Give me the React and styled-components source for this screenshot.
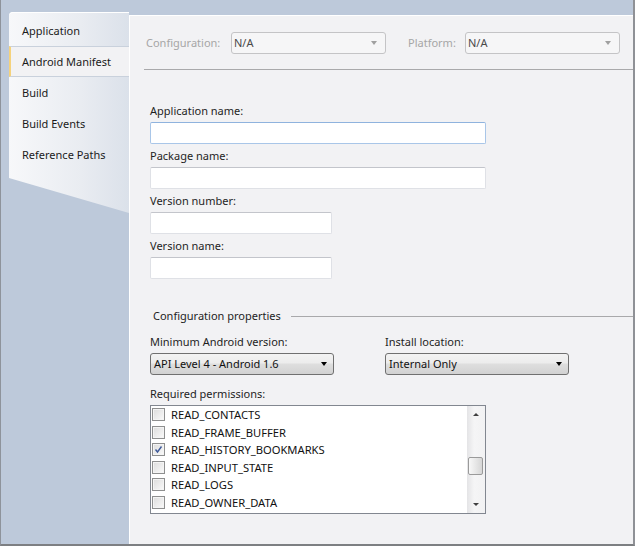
import React from 'react'
import styled, { createGlobalStyle } from 'styled-components'

const GlobalStyle = createGlobalStyle`
  html, body {
    margin: 0;
    padding: 0;
    background: #bdc9da;
  }
  body {
    font-family: "Noto Sans", "Open Sans", sans-serif;
    font-size: 11px;
    color: #1e1e1e;
  }
`

const Frame = styled.div`
  width: 635px;
  height: 546px;
  box-sizing: border-box;
  display: flex;
  background: #bdc9da;
  border-left: 1px solid #8e939b;
  border-right: 2px solid #8f9196;
  border-bottom: 2px solid #7d7f82;
`

const Sidebar = styled.nav`
  width: 128px;
  flex-shrink: 0;
  padding: 12px 0 0 8px;
  box-sizing: border-box;
  position: relative;
  z-index: 1;
`

const TabList = styled.div`
  height: 201px;
  padding-top: 3px;
  box-sizing: border-box;
  border-top-left-radius: 4px;
  background: linear-gradient(to right, #f7f8fa 0%, #e9ecf1 60%, #dbe1ea 100%);
  box-shadow: inset 0 1px 0 #ffffff;
  clip-path: polygon(0 0, 100% 0, 100% 100%, 0 166px);
`

const Tab = styled.div`
  height: 31px;
  display: flex;
  align-items: center;
  box-sizing: border-box;
  padding-left: ${p => (p.$active ? '11px' : '13px')};
  padding-bottom: 1px;
  margin-right: ${p => (p.$active ? '-2px' : '0')};
  background: ${p => (p.$active ? '#f2f2f4' : 'transparent')};
  border-left: ${p => (p.$active ? '2px solid #f5d27c' : 'none')};
  border-top: ${p => (p.$active ? '1px solid #c9d1dc' : 'none')};
  border-bottom: ${p => (p.$active ? '1px solid #c9d1dc' : 'none')};
  font-size: 11px;
  color: #1b1b1b;

  & + & {
    box-shadow: ${p => (p.$active ? 'none' : 'inset 0 1px 0 #e6e9ee')};
  }
`

const Panel = styled.main`
  flex: 1;
  margin-top: 15px;
  background: #f2f2f4;
  border-top: 1px solid #ffffff;
  border-left: 1px solid #ffffff;
  display: flex;
  flex-direction: column;
`

const Header = styled.div`
  display: flex;
  align-items: center;
  margin-left: 14px;
  padding: 16px 0 15px 2px;
  border-bottom: 1px solid #a9a9ab;
`

const DimLabel = styled.span`
  width: ${p => p.$w}px;
  color: #a6a6a6;
  padding-bottom: 1px;
`

const DisabledSelect = styled.div`
  width: 155px;
  height: 22px;
  box-sizing: border-box;
  margin-right: ${p => p.$gap || 0}px;
  border: 1px solid #c4c4c6;
  border-radius: 3px;
  background: #f6f6f7;
  display: flex;
  align-items: center;
  justify-content: space-between;
  padding: 0 8px 1px 2px;
  color: #4a4a4a;
`

const Arrow = styled.span`
  width: 0;
  height: 0;
  border-left: 3.5px solid transparent;
  border-right: 3.5px solid transparent;
  border-top: 4px solid ${p => p.$color || '#000'};
`

const Form = styled.section`
  padding: 33px 0 0 20px;
  display: flex;
  flex-direction: column;
`

const Field = styled.div`
  display: flex;
  flex-direction: column;
  margin-bottom: 4px;
  margin-top: ${p => p.$top || 0}px;
`

const Label = styled.label`
  line-height: 15px;
  margin-bottom: 4px;
  white-space: nowrap;
`

const TextBox = styled.div`
  width: ${p => p.$w}px;
  height: 22px;
  box-sizing: border-box;
  background: #ffffff;
  border: 1px solid ${p => (p.$focus ? '#a9c6e8' : '#dfe1e6')};
  border-top-color: ${p => (p.$focus ? '#8fb3de' : '#c3c5cb')};
  border-radius: 2px;
`

const GroupTitle = styled.div`
  display: flex;
  align-items: center;
  margin-top: 25px;
  padding-left: 3px;
  line-height: 15px;

  &::after {
    content: '';
    flex: 1;
    height: 1px;
    margin: 0 0 -1px 10px;
    background: #a9a9ab;
  }
`

const Columns = styled.div`
  display: flex;
  gap: 51px;
  margin-top: 11px;
`

const Combo = styled.div`
  width: 184px;
  height: 22px;
  box-sizing: border-box;
  border: 1px solid #707070;
  border-radius: 3px;
  background: linear-gradient(#f3f3f3 0%, #ececec 45%, #dedede 50%, #d2d2d2 100%);
  display: flex;
  align-items: center;
  justify-content: space-between;
  padding: 0 6px 1px 3px;
  color: #111;
  font-size: 11px;
`

const ListBox = styled.div`
  width: 336px;
  height: 109px;
  box-sizing: border-box;
  border: 1px solid #828790;
  background: #ffffff;
  display: flex;
`

const Items = styled.ul`
  flex: 1;
  margin: 0;
  padding: 0 0 0 1px;
  list-style: none;
`

const Item = styled.li`
  height: 17.5px;
  display: flex;
  align-items: center;
  gap: 6px;
  font-size: 11.2px;
  color: #111;
`

const CheckBox = styled.span`
  width: 13px;
  height: 13px;
  box-sizing: border-box;
  border: 1px solid #8e8f8f;
  background: linear-gradient(135deg, #dcdcdc 0%, #f4f4f4 80%, #ffffff 100%);
  box-shadow: inset 0 0 0 1px #f4f4f4;
  display: flex;
  align-items: center;
  justify-content: center;
  flex-shrink: 0;
`

const ScrollBar = styled.div`
  width: 18px;
  display: flex;
  flex-direction: column;
  background: linear-gradient(to right, #e4e4e6, #f5f5f6 40%, #f2f2f3);
`

const ScrollButton = styled.div`
  height: 17px;
  display: flex;
  align-items: center;
  justify-content: center;
`

const Track = styled.div`
  flex: 1;
  padding: 34px 0 0 1px;
`

const Thumb = styled.div`
  width: 15px;
  height: 18px;
  box-sizing: border-box;
  border: 1px solid #9a9a9a;
  border-radius: 2px;
  background: linear-gradient(to right, #f8f8f8, #e4e4e4 60%, #d6d6d6);
`

const Tri = styled.span`
  width: 0;
  height: 0;
  border-left: 3px solid transparent;
  border-right: 3px solid transparent;
  ${p => (p.$up ? 'border-bottom: 3px solid #404040;' : 'border-top: 3px solid #404040;')}
`

const tabs = ['Application', 'Android Manifest', 'Build', 'Build Events', 'Reference Paths']

const permissions = [
  ['READ_CONTACTS', false],
  ['READ_FRAME_BUFFER', false],
  ['READ_HISTORY_BOOKMARKS', true],
  ['READ_INPUT_STATE', false],
  ['READ_LOGS', false],
  ['READ_OWNER_DATA', false],
]

const Check = () => (
  <svg width="9" height="9" viewBox="0 0 9 9">
    <path d="M1.5 4.5 L3.5 7 L7.5 1.5" fill="none" stroke="#3e5a9a" strokeWidth="1.4" />
  </svg>
)

export default function App() {
  return (
    <>
      <GlobalStyle />
      <Frame>
        <Sidebar>
          <TabList>
            {tabs.map(t => (
              <Tab key={t} $active={t === 'Android Manifest'}>{t}</Tab>
            ))}
          </TabList>
        </Sidebar>
        <Panel>
          <Header>
            <DimLabel $w={85}>Configuration:</DimLabel>
            <DisabledSelect $gap={22}>N/A<Arrow $color="#a0a0a0" /></DisabledSelect>
            <DimLabel $w={57}>Platform:</DimLabel>
            <DisabledSelect>N/A<Arrow $color="#a0a0a0" /></DisabledSelect>
          </Header>
          <Form>
            <Field>
              <Label>Application name:</Label>
              <TextBox $w={336} $focus />
            </Field>
            <Field>
              <Label>Package name:</Label>
              <TextBox $w={336} />
            </Field>
            <Field>
              <Label>Version number:</Label>
              <TextBox $w={182} />
            </Field>
            <Field>
              <Label>Version name:</Label>
              <TextBox $w={182} />
            </Field>
            <GroupTitle>Configuration properties</GroupTitle>
            <Columns>
              <Field>
                <Label>Minimum Android version:</Label>
                <Combo>API Level 4 - Android 1.6<Arrow /></Combo>
              </Field>
              <Field>
                <Label>Install location:</Label>
                <Combo>Internal Only<Arrow /></Combo>
              </Field>
            </Columns>
            <Field $top={7}>
              <Label>Required permissions:</Label>
              <ListBox>
                <Items>
                  {permissions.map(([name, on]) => (
                    <Item key={name}>
                      <CheckBox>{on && <Check />}</CheckBox>
                      {name}
                    </Item>
                  ))}
                </Items>
                <ScrollBar>
                  <ScrollButton><Tri $up /></ScrollButton>
                  <Track><Thumb /></Track>
                  <ScrollButton><Tri /></ScrollButton>
                </ScrollBar>
              </ListBox>
            </Field>
          </Form>
        </Panel>
      </Frame>
    </>
  )
}
